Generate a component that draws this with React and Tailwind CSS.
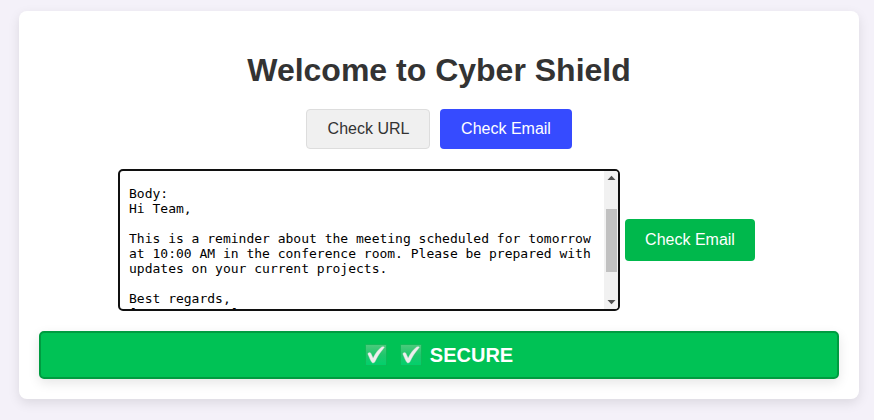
const emailBody = `Body:
Hi Team,

This is a reminder about the meeting scheduled for tomorrow
at 10:00 AM in the conference room. Please be prepared with
updates on your current projects.

Best regards,
[Manager Name]`;

function CheckMark({ id }) {
  return (
    <svg className="h-[22px] w-[22px] shrink-0" viewBox="0 0 22 22" aria-hidden="true">
      <defs>
        <linearGradient id={id} x1="0" y1="0" x2="0" y2="1">
          <stop offset="0" stopColor="#4ccb7c" />
          <stop offset="0.5" stopColor="#1fc66c" />
          <stop offset="1" stopColor="#00d16b" />
        </linearGradient>
      </defs>
      <rect x="0.5" y="0.5" width="21" height="21" rx="0.7" fill={`url(#${id})`} stroke="#0fb656" strokeWidth="0.8" />
      <path
        d="M3.2 9.1C4.2 8.1 5.4 8.3 6 9.5L8.1 14.1C10.2 9.6 13.1 5.8 16.6 3.1C17.3 2.6 19 2.5 19.3 3.1C19.5 3.5 18.8 4.2 18.2 4.9C14.8 8.7 12.2 12.8 10.1 17.5C9.5 19 7.4 19.5 6.6 18.1C5.5 16.2 4.2 13.3 3 10.5C2.8 10 2.8 9.5 3.2 9.1Z"
        fill="#eeeeee"
        stroke="#c5dccd"
        strokeWidth="0.4"
      />
    </svg>
  );
}

function ScrollBar() {
  return (
    <div className="flex w-[14px] shrink-0 flex-col items-center bg-[#f1f1f1]">
      <svg className="h-[14px] w-[14px]" viewBox="0 0 14 14">
        <path d="M3.5 9L7.5 4.7L11.5 9Z" fill="#505050" />
      </svg>
      <div className="mt-6 ml-px h-[63px] w-[11px] bg-[#c1c1c1]" />
      <svg className="mt-auto h-[14px] w-[14px]" viewBox="0 0 14 14">
        <path d="M3.5 5L7.5 9.3L11.5 5Z" fill="#505050" />
      </svg>
    </div>
  );
}

export default function App() {
  return (
    <div className="h-[420px] bg-[#f4f1f9] pt-[11px] pl-[19px] font-['Liberation_Sans',Arial,sans-serif]">
      <main className="flex h-[388px] w-[840px] flex-col rounded-lg bg-white p-5 shadow-[0_4px_12px_rgba(0,0,0,0.1)]">
        <h1 className="mt-[21px] text-center text-[32px] leading-[37px] font-bold text-[#333333]">
          Welcome to Cyber Shield
        </h1>
        <div className="mt-5 flex justify-center gap-2.5">
          <button className="h-10 w-[124px] rounded-[4px] border border-[#dddddd] bg-[#f0f0f0] pl-px text-base leading-[18px] text-[#333333]">
            Check URL
          </button>
          <button className="h-10 w-[132px] rounded-[4px] bg-[#364bff] text-base leading-[18px] text-white">
            Check Email
          </button>
        </div>
        <div className="mt-5 ml-[79px] flex items-center gap-[5px]">
          <div className="flex h-[142px] w-[502px] overflow-hidden rounded-[5px] border-2 border-[#101010] bg-white">
            <div className="min-w-0 flex-1 overflow-hidden pt-[15px] pl-[9px] font-['DejaVu_Sans_Mono',monospace] text-[13px] leading-[15px] whitespace-pre text-black">
              {emailBody}
            </div>
            <ScrollBar />
          </div>
          <button className="h-[42px] w-[130px] rounded-[4px] bg-[#00b84c] text-base leading-[18px] text-white">
            Check Email
          </button>
        </div>
        <div className="mt-5 flex h-12 shrink-0 items-center justify-center rounded-[5px] border-2 border-[#009b40] bg-[#00c255] text-xl leading-[23px] font-bold text-white shadow-[0_4px_12px_rgba(0,0,0,0.1)]">
          <CheckMark id="check-status" />
          <span className="ml-[13px] flex items-center gap-2">
            <CheckMark id="check-result" />
            SECURE
          </span>
        </div>
      </main>
    </div>
  );
}
